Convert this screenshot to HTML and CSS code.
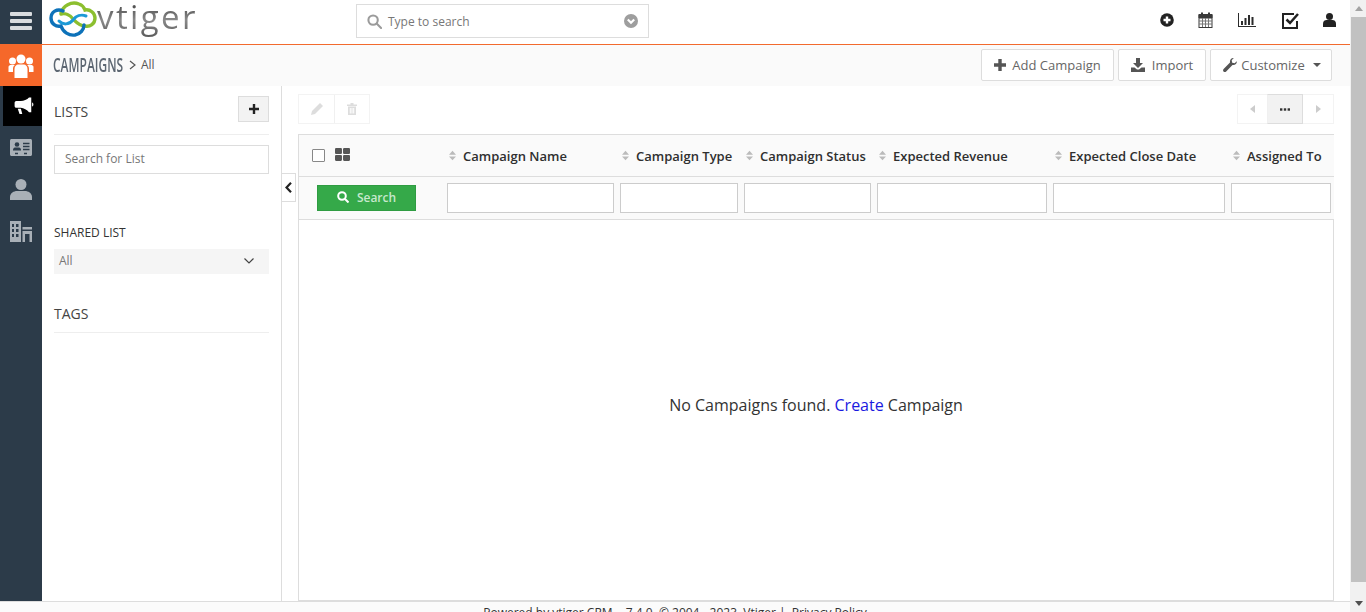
FILE: index.html
```html
<!DOCTYPE html>
<html lang="en">
<head>
  <meta charset="UTF-8" />
  <title>Campaigns</title>
  <link rel="stylesheet" href="styles.css">
</head>
<body>
  <div class="app">
    <div class="page">
      <header class="topbar">
        <div class="menu-toggle"><span></span><span></span><span></span></div>
        <div class="logo">
          <svg class="logo-mark" width="48" height="36" viewBox="0 0 48 36" fill="none" stroke-linecap="round">
            <path d="M12 12C14 5 22 0 30 3C33 4 35 6 36 9C41 8 46 12 46 17C46 23 41 26 36 25C30 25 27 21 24 18C21 14 16 12 12 13" stroke="#8cbf2f" stroke-width="3.400"/>
            <path d="M14 10C8 7 2 11 2 17C2 23 7 26 12 25C14 31 20 35 26 34C31 33 35 29 35 24" stroke="#0d72b9" stroke-width="3.400"/>
            <path d="M10 20C14 24 20 24 24 19C27 15 32 13 37 15" stroke="#1c9ad6" stroke-width="3"/>
          </svg>
          <span class="logo-text">vtiger</span>
        </div>
        <div class="global-search">
          <svg width="15" height="15" viewBox="0 0 16 16" fill="none" stroke="#9b9b9b" stroke-width="2.200"><circle cx="6.500" cy="6.500" r="5"/><path d="M10.500 10.500L15 15" stroke-linecap="round"/></svg>
          <span class="global-search-text">Type to search</span>
          <svg class="global-search-arrow" width="14" height="14" viewBox="0 0 14 14"><circle cx="7" cy="7" r="7" fill="#9e9e9e"/><path d="M3.800 5.500L7 8.700L10.200 5.500" fill="none" stroke="#fff" stroke-width="2.200"/></svg>
        </div>
        <div class="top-icons">
          <svg width="14" height="14" viewBox="0 0 14 14"><circle cx="7" cy="7" r="6.800" fill="#222"/><path d="M7 3.500V10.500M3.500 7H10.500" stroke="#fff" stroke-width="2.400"/></svg>
          <svg width="15" height="16" viewBox="0 0 15 16" fill="none" stroke="#3a3a3a"><rect x="1" y="2.500" width="13" height="13" fill="#fff"/><path d="M1 3H14V6H1Z" fill="#3a3a3a"/><path d="M1 9H14M1 12H14M4.500 6V15M7.500 6V15M10.500 6V15" stroke="#777"/><path d="M4 0.500V4M11 0.500V4" stroke-width="2"/></svg>
          <svg width="18" height="14" viewBox="0 0 18 14" fill="#2b2b2b"><rect x="0" y="0" width="1" height="13"/><rect x="0" y="13" width="18" height="1"/><rect x="3" y="8" width="2" height="4"/><rect x="6.500" y="5" width="2" height="7"/><rect x="10" y="2" width="2" height="10"/><rect x="13.500" y="4" width="2" height="8"/></svg>
          <svg class="tasks-icon" width="17" height="17" viewBox="0 0 17 17" fill="none"><path d="M12 2H1V16H15V9" stroke="#222" stroke-width="2"/><path d="M4.500 7.500L8 11L16 2" stroke="#222" stroke-width="2.500"/></svg>
          <svg width="13" height="14" viewBox="0 0 13 14" fill="#222"><circle cx="6.500" cy="3.500" r="3.500"/><path d="M0 14V10.500C0 8 2 7 3.500 7H9.500C11 7 13 8 13 10.500V14Z"/></svg>
        </div>
      </header>

      <div class="workspace">
        <nav class="rail">
          <div class="rail-item rail-module">
            <svg width="26" height="26" viewBox="0 0 26 26" fill="#fff"><circle cx="13" cy="6" r="4.500"/><circle cx="4.500" cy="8" r="3.500"/><circle cx="21.500" cy="8" r="3.500"/><path d="M0.500 19V14C0.500 12.500 2 12 3 12H7C5.500 13 5 14 5 16V19ZM25.500 19V14C25.500 12.500 24 12 23 12H19C20.500 13 21 14 21 16V19Z"/><path d="M6.500 25V16C6.500 13 8.500 11.500 10 11.500H16C17.500 11.500 19.500 13 19.500 16V25Z"/></svg>
          </div>
          <div class="rail-item rail-active">
            <svg width="21" height="18" viewBox="0 0 22 20" fill="#fff"><path d="M16 0.500H18.500V17H16C14 14 10 12.500 7 12H2C0.800 12 0 11 0 10V6.500C0 5.500 0.800 4.500 2 4.500H7C10 4 14 3 16 0.500Z"/><path d="M19.500 6C21.300 6.500 21.300 10 19.500 10.500Z"/><path d="M3.500 13H7L8.500 19H5.500Z"/></svg>
          </div>
          <div class="rail-item">
            <svg width="22" height="17" viewBox="0 0 22 17" fill="#a9b0b7"><path d="M1.500 0H20.500C21.300 0 22 .7 22 1.500V15.500C22 16.300 21.300 17 20.500 17H1.500C.7 17 0 16.300 0 15.500V1.500C0 .7 .7 0 1.500 0Z"/><circle cx="7" cy="5.500" r="2.300" fill="#2c3b49"/><path d="M3 11C3 9 4.500 8.500 5.500 8.500H8.500C9.500 8.500 11 9 11 11V11.500H3Z" fill="#2c3b49"/><path d="M13 4.500H19.500M13 7.500H19.500M13 10.500H19.500M5 14.500H8M14 14.500H17" stroke="#2c3b49" stroke-width="1.400"/></svg>
          </div>
          <div class="rail-item">
            <svg width="22" height="21" viewBox="0 0 22 21" fill="#a9b0b7"><circle cx="11" cy="5.500" r="5.500"/><path d="M0 21V18C0 14 4 12 7 12H15C18 12 22 14 22 18V21Z"/></svg>
          </div>
          <div class="rail-item">
            <svg width="22" height="21" viewBox="0 0 22 21" fill="#a9b0b7"><path d="M0 0H11V21H0Z"/><path d="M12.500 6H22V8.500H12.500ZM12.500 10H22V21H19.500V13H15V21H12.500Z"/><path d="M2 3H4V6H2ZM6 3H8.500V6H6ZM2 8H4V11H2ZM6 8H8.500V11H6ZM2 13H4V16H2ZM6 13H8.500V16H6Z" fill="#2c3b49"/></svg>
          </div>
        </nav>

        <div class="module">
          <div class="module-header">
            <div class="crumbs">
              <span class="crumb-title">CAMPAIGNS</span>
              <svg width="7" height="10" viewBox="0 0 7 10" fill="none" stroke="#555" stroke-width="1.200"><path d="M1 1L6 5L1 9"/></svg>
              <span class="crumb-sub">All</span>
            </div>
            <div class="module-actions">
              <button class="btn btn-add">
                <svg width="12" height="12" viewBox="0 0 12 12"><path d="M6 0V12M0 6H12" stroke="#555" stroke-width="3.400"/></svg>
                Add Campaign
              </button>
              <button class="btn btn-import">
                <svg width="14" height="14" viewBox="0 0 14 14" fill="#555"><path d="M5 0H9V5H12L7 10L2 5H5Z"/><path d="M0 9.500H3.500L6 11.500H8L10.500 9.500H14V14H0Z"/></svg>
                Import
              </button>
              <button class="btn btn-customize">
                <svg width="14" height="14" viewBox="0 0 14 14" fill="#555"><path d="M13.800 3.200C14.200 5.500 12.200 7.500 9.500 7L3.200 13.400C2.400 14.200 1.100 14.200 .5 13.400C-.2 12.700 -.1 11.600 .6 10.900L7 4.500C6.500 1.900 8.500 -.3 10.800 .1L8.700 2.300L9.200 4.700L11.600 5.300Z"/></svg>
                Customize
                <span class="caret"></span>
              </button>
            </div>
          </div>

          <div class="module-body">
            <aside class="sidebar">
              <div class="side-head">
                <span class="side-title">LISTS</span>
                <button class="add-list">
                  <svg width="10" height="10" viewBox="0 0 10 10"><path d="M5 0V10M0 5H10" stroke="#222" stroke-width="2.400"/></svg>
                </button>
              </div>
              <input class="list-search" type="text" placeholder="Search for List">
              <div class="shared-label">SHARED LIST</div>
              <div class="shared-select">
                <span>All</span>
                <svg width="10" height="6" viewBox="0 0 10 6" fill="none" stroke="#444" stroke-width="1.200"><path d="M.5 .5L5 5L9.500 .5"/></svg>
              </div>
              <div class="side-title tags-title">TAGS</div>
            </aside>

            <main class="content">
              <button class="collapse">
                <svg width="7" height="11" viewBox="0 0 7 11" fill="none" stroke="#222" stroke-width="2.200"><path d="M6 .8L1.500 5.500L6 10.200"/></svg>
              </button>

              <div class="toolbar">
                <div class="btn-group">
                  <span class="tool">
                    <svg width="12" height="12" viewBox="0 0 12 12" fill="#ddd"><path d="M9 0L12 3L4 11L0 12L1 8Z"/></svg>
                  </span>
                  <span class="tool">
                    <svg width="10" height="12" viewBox="0 0 10 12" fill="#ddd"><path d="M0 1.500H3.500V0H6.500V1.500H10V3H0ZM1 3.500H9V12H1ZM2.800 5V10.500H3.800V5ZM4.500 5V10.500H5.500V5ZM6.200 5V10.500H7.200V5Z" fill-rule="evenodd"/></svg>
                  </span>
                </div>
                <div class="btn-group">
                  <span class="tool pager-arrow">
                    <svg width="5" height="8" viewBox="0 0 5 8" fill="#ccc"><path d="M5 0V8L0 4Z"/></svg>
                  </span>
                  <span class="tool pager-more">
                    <svg width="10" height="3" viewBox="0 0 10 3" fill="#333"><rect width="2.400" height="2.400" y=".3"/><rect x="3.800" width="2.400" height="2.400" y=".3"/><rect x="7.600" width="2.400" height="2.400" y=".3"/></svg>
                  </span>
                  <span class="tool pager-arrow">
                    <svg width="5" height="8" viewBox="0 0 5 8" fill="#ccc"><path d="M0 0V8L5 4Z"/></svg>
                  </span>
                </div>
              </div>

              <div class="list-table">
                <div class="table-row table-head">
                  <div class="select-cell">
                    <span class="checkbox"></span>
                    <svg class="view-icon" width="15" height="13" viewBox="0 0 14 12" fill="#555"><rect width="6.500" height="5.500" rx="1"/><rect x="7.500" width="6.500" height="5.500" rx="1"/><rect y="6.500" width="6.500" height="5.500" rx="1"/><rect x="7.500" y="6.500" width="6.500" height="5.500" rx="1"/></svg>
                  </div>
                  <div class="col-label"><svg class="sort" width="7" height="11" viewBox="0 0 8 11" fill="#bbb"><path d="M4 0L8 4.500H0ZM4 11L0 6.500H8Z"/></svg>Campaign Name</div>
                  <div class="col-label"><svg class="sort" width="7" height="11" viewBox="0 0 8 11" fill="#bbb"><path d="M4 0L8 4.500H0ZM4 11L0 6.500H8Z"/></svg>Campaign Type</div>
                  <div class="col-label"><svg class="sort" width="7" height="11" viewBox="0 0 8 11" fill="#bbb"><path d="M4 0L8 4.500H0ZM4 11L0 6.500H8Z"/></svg>Campaign Status</div>
                  <div class="col-label"><svg class="sort" width="7" height="11" viewBox="0 0 8 11" fill="#bbb"><path d="M4 0L8 4.500H0ZM4 11L0 6.500H8Z"/></svg>Expected Revenue</div>
                  <div class="col-label"><svg class="sort" width="7" height="11" viewBox="0 0 8 11" fill="#bbb"><path d="M4 0L8 4.500H0ZM4 11L0 6.500H8Z"/></svg>Expected Close Date</div>
                  <div class="col-label"><svg class="sort" width="7" height="11" viewBox="0 0 8 11" fill="#bbb"><path d="M4 0L8 4.500H0ZM4 11L0 6.500H8Z"/></svg>Assigned To</div>
                </div>
                <div class="table-row table-filter">
                  <div class="search-cell">
                    <button class="btn-search">
                      <svg width="12" height="12" viewBox="0 0 12 12" fill="none" stroke="#fff" stroke-width="2"><circle cx="5" cy="5" r="3.800"/><path d="M8 8L11.500 11.500"/></svg>
                      Search
                    </button>
                  </div>
                  <input class="filter-input" type="text">
                  <input class="filter-input" type="text">
                  <input class="filter-input" type="text">
                  <input class="filter-input" type="text">
                  <input class="filter-input" type="text">
                  <input class="filter-input" type="text">
                </div>
                <div class="empty">
                  <p>No Campaigns found. <a href="#">Create</a> Campaign</p>
                </div>
              </div>
            </main>
          </div>
        </div>
      </div>

      <footer class="footer">Powered by vtiger CRM&nbsp; - 7.4.0&nbsp; © 2004 - 2023&nbsp; Vtiger |&nbsp; Privacy Policy</footer>
    </div>

    <div class="scrollbar">
      <span class="scroll-up"></span>
      <span class="scroll-thumb"></span>
      <span class="scroll-down"></span>
    </div>
  </div>
</body>
</html>
```

FILE: styles.css
```css
* {
  box-sizing: border-box;
}

:root {
  --rail: #2c3b49;
  --orange: #f26a2e;
  --line: #ddd;
  --text: #555;
}

html, body {
  margin: 0;
  height: 100%;
  overflow: hidden;
}

body {
  font-family: "Open Sans", sans-serif;
  font-size: 13px;
  color: var(--text);
  background: #fff;
}

.app {
  display: flex;
  height: 612px;
}

.page {
  width: 1350px;
  display: flex;
  flex-direction: column;
}

/* top bar */
.topbar {
  height: 45px;
  flex-shrink: 0;
  display: flex;
  align-items: flex-start;
  border-bottom: 1px solid var(--orange);
}

.menu-toggle {
  width: 42px;
  height: 44px;
  background: var(--rail);
  display: flex;
  flex-direction: column;
  gap: 3px;
  padding: 12px 10px 0;
}

.menu-toggle span {
  display: block;
  height: 4px;
  background: #d9dcdf;
  border-radius: 1px;
}

.logo {
  width: 314px;
  display: flex;
  align-items: flex-start;
  padding: 1px 0 0 7px;
}

.logo-text {
  font-family: "Open Sans", sans-serif;
  font-size: 33px;
  line-height: 31px;
  padding-bottom: 7px;
  letter-spacing: 2.400px;
  background: linear-gradient(#3c3c3c, #8a8a8a 50%, #555);
  -webkit-background-clip: text;
  background-clip: text;
  color: transparent;
}

.global-search {
  width: 293px;
  height: 34px;
  margin-top: 4px;
  border: 1px solid var(--line);
  display: flex;
  align-items: center;
  padding: 0 10px;
  gap: 6px;
}

.global-search-text {
  flex: 1;
  font-size: 12px;
  color: #777;
}

.top-icons {
  margin-left: auto;
  width: 190px;
  height: 40px;
  padding-right: 14px;
  display: flex;
  align-items: center;
  justify-content: space-between;
}

.tasks-icon {
  margin-left: 2px;
}

/* left rail */
.workspace {
  flex: 1;
  display: flex;
  min-height: 0;
}

.rail {
  width: 42px;
  flex-shrink: 0;
  background: var(--rail);
}

.rail-item {
  height: 42px;
  display: flex;
  align-items: center;
  justify-content: center;
}

.rail-module {
  height: 41px;
  background: #f5682a;
}

.rail-active {
  height: 40px;
  margin-left: 3px;
  background: #000;
  padding-left: 4px;
}

/* module header */
.module {
  flex: 1;
  display: flex;
  flex-direction: column;
  min-width: 0;
}

.module-header {
  height: 41px;
  flex-shrink: 0;
  background: #fafafa;
  display: flex;
  align-items: flex-start;
  justify-content: space-between;
  padding: 4px 18px 0 11px;
}

.crumbs {
  display: flex;
  align-items: center;
  height: 31px;
  gap: 5px;
}

.crumb-title {
  display: inline-block;
  width: 71px;
  white-space: nowrap;
  font-size: 19px;
  font-weight: 600;
  color: #5d6772;
  transform: scaleX(.63);
  transform-origin: left center;
}

.crumb-sub {
  font-size: 12px;
  color: #555;
}

.module-actions {
  display: flex;
  gap: 4px;
}

.btn {
  height: 32px;
  background: #fff;
  border: 1px solid var(--line);
  border-radius: 2px;
  font-family: inherit;
  font-size: 13px;
  color: #666;
  display: flex;
  align-items: center;
  justify-content: center;
  gap: 6px;
  padding: 0 0 1px;
}

.btn-add { width: 133px; }
.btn-import { width: 88px; gap: 7px; }
.btn-customize { width: 122px; gap: 4px; padding-left: 2px; }

.caret {
  width: 0;
  height: 0;
  margin-left: 4px;
  border-left: 4px solid transparent;
  border-right: 4px solid transparent;
  border-top: 4px solid #555;
}

.module-body {
  flex: 1;
  display: flex;
  min-height: 0;
}

/* lists sidebar */
.sidebar {
  width: 240px;
  flex-shrink: 0;
  border-right: 1px solid var(--line);
  padding: 10px 12px 0;
}

.side-head {
  height: 39px;
  display: flex;
  justify-content: space-between;
  align-items: flex-start;
  border-bottom: 1px solid #eee;
}

.side-title {
  font-size: 14px;
  color: #444;
  line-height: 20px;
  padding-top: 6px;
}

.add-list {
  width: 31px;
  height: 26px;
  background: #f3f3f3;
  border: 1px solid var(--line);
  padding: 0;
  display: flex;
  align-items: center;
  justify-content: center;
}

.list-search {
  display: block;
  width: 100%;
  height: 29px;
  margin-top: 10px;
  padding: 0 10px 2px;
  border: 1px solid var(--line);
  font-family: inherit;
  font-size: 12px;
  outline: none;
}

.list-search::placeholder {
  color: #777;
  opacity: 1;
}

.shared-label {
  margin-top: 50px;
  font-size: 12px;
  line-height: 17px;
  color: #333;
}

.shared-select {
  height: 25px;
  margin-top: 8px;
  background: #f5f5f5;
  display: flex;
  align-items: center;
  justify-content: space-between;
  padding: 0 15px 2px 5px;
  font-size: 12px;
  color: #777;
}

.tags-title {
  margin-top: 25px;
  padding: 5px 0 8px;
  border-bottom: 1px solid #eee;
}

/* list area */
.content {
  flex: 1;
  position: relative;
  min-width: 0;
  padding: 8px 16px 0;
  display: flex;
  flex-direction: column;
}

.collapse {
  position: absolute;
  left: 0;
  top: 87px;
  width: 14px;
  height: 29px;
  padding: 0;
  background: #fff;
  border: 1px solid var(--line);
  border-left: none;
  display: flex;
  align-items: center;
  justify-content: center;
}

.toolbar {
  display: flex;
  justify-content: space-between;
  height: 30px;
  margin-bottom: 10px;
  flex-shrink: 0;
}

.btn-group {
  display: flex;
  border: 1px solid #f3f3f3;
}

.tool {
  width: 35px;
  display: flex;
  align-items: center;
  justify-content: center;
}

.tool + .tool {
  border-left: 1px solid #f0f0f0;
}

.pager-arrow {
  width: 29px;
}

.pager-more {
  width: 36px;
  background: #f2f2f2;
  border: 1px solid var(--line);
  margin: -1px 0;
}

.pager-more + .pager-arrow {
  width: 30px;
  border-left: none;
}

.list-table {
  flex: 1;
  display: flex;
  flex-direction: column;
  border-top: 1px solid var(--line);
  border-left: 1px solid var(--line);
  min-height: 0;
}

.table-row {
  display: grid;
  grid-template-columns: 142px 167px 118px 127px 170px 172px 100px;
  column-gap: 6px;
  flex-shrink: 0;
}

.table-head {
  height: 42px;
  background: #fafafa;
  border-bottom: 1px solid var(--line);
  align-items: center;
}

.select-cell {
  display: flex;
  align-items: center;
  gap: 10px;
  padding-left: 13px;
}

.checkbox {
  width: 13px;
  height: 13px;
  background: #fff;
  border: 1px solid #888;
  border-radius: 1px;
}

.view-icon {
  margin-top: -2px;
}

.col-label {
  display: flex;
  align-items: center;
  font-size: 13px;
  font-weight: 600;
  color: #2f2f2f;
  white-space: nowrap;
  padding-left: 2px;
}

.sort {
  margin-right: 7px;
}

.table-filter {
  height: 42px;
  padding-top: 6px;
  background: #fafafa;
}

.search-cell {
  padding: 2px 0 0 18px;
}

.btn-search {
  width: 99px;
  height: 26px;
  background: #35a949;
  border: 1px solid #2f9c42;
  font-family: inherit;
  font-size: 12px;
  font-weight: 600;
  color: #c6e8cc;
  display: flex;
  align-items: center;
  justify-content: center;
  gap: 8px;
  padding: 0 0 2px;
}

.filter-input {
  width: 100%;
  height: 30px;
  background: #fff;
  border: 1px solid #ccc;
  outline: none;
}

.empty {
  flex: 1;
  display: flex;
  align-items: center;
  justify-content: center;
  padding-bottom: 11px;
  border-top: 1px solid var(--line);
  border-right: 1px solid var(--line);
  border-bottom: 1px solid var(--line);
}

.empty p {
  margin: 0;
  font-size: 16px;
  color: #333;
}

.empty a {
  color: #1a1ae0;
  text-decoration: none;
}

/* footer */
.footer {
  height: 11px;
  flex-shrink: 0;
  background: #fbfbfb;
  border-top: 1px solid var(--line);
  padding-top: 4px;
  font-size: 12px;
  line-height: 14px;
  text-align: center;
  color: #333;
  overflow: hidden;
}

/* window scrollbar */
.scrollbar {
  width: 16px;
  background: #f1f1f1;
  display: flex;
  flex-direction: column;
  align-items: center;
  padding-left: 1px;
}

.scroll-up, .scroll-down {
  width: 0;
  height: 0;
  border-left: 4px solid transparent;
  border-right: 4px solid transparent;
  margin: 6px 0;
}

.scroll-up {
  border-bottom: 5px solid #a3a3a3;
}

.scroll-down {
  border-top: 5px solid #505050;
  margin-top: auto;
}

.scroll-thumb {
  width: 100%;
  height: 565px;
  background: #c1c1c1;
}
```
